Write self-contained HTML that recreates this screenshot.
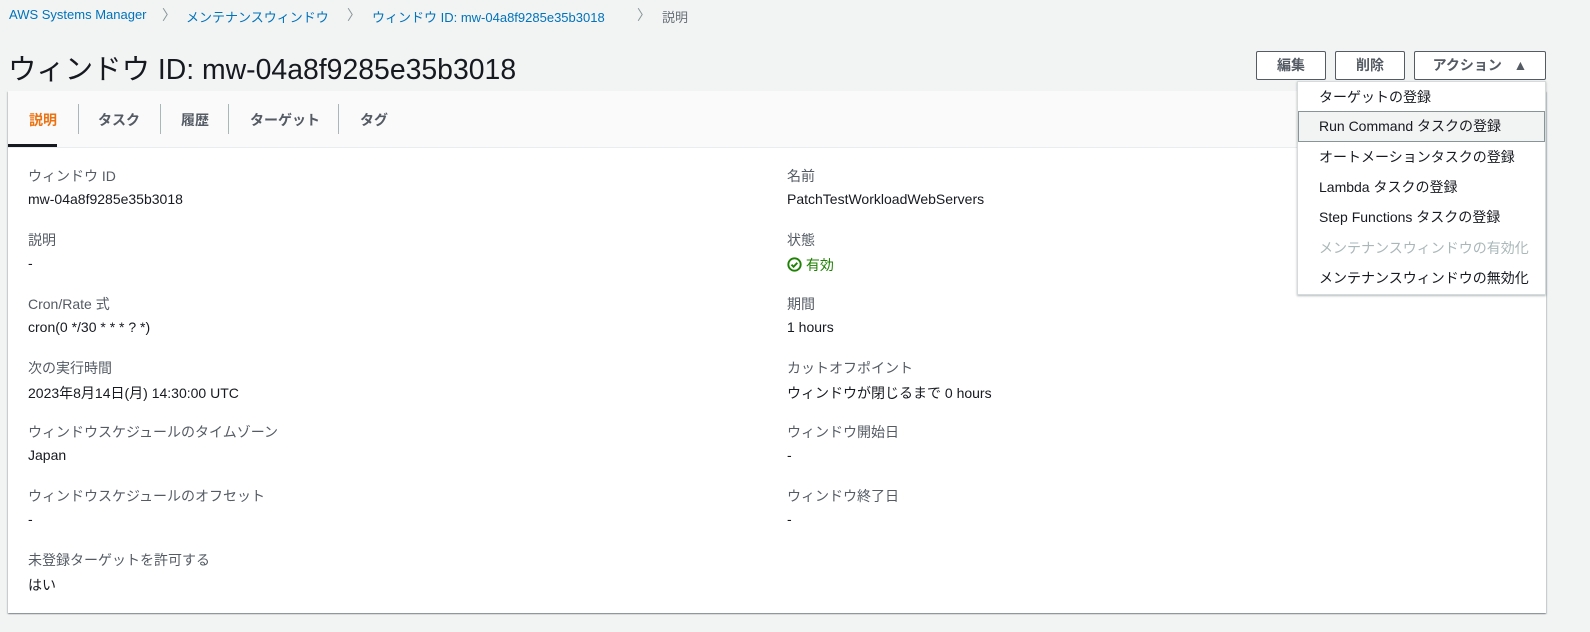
<!DOCTYPE html>
<html><head><meta charset="utf-8"><style>
*{margin:0;padding:0;box-sizing:border-box}
body{width:1590px;height:632px;background:#f2f3f3;font-family:"Liberation Sans","Noto Sans CJK JP",sans-serif;color:#16191f;position:relative;overflow:hidden}
.a{position:absolute;white-space:nowrap}
.bc{top:7px;font-size:13px;color:#0073bb}
.sep{position:absolute;top:5px;color:#879596;font-size:14px}
.btn{position:absolute;top:51px;height:29px;border:1px solid #545b64;background:#fff;font-size:14px;font-weight:bold;color:#545b64;text-align:center;line-height:27px;border-radius:2px}
.panel{position:absolute;left:8px;top:91px;width:1538px;height:522px;background:#fff;box-shadow:0 1px 1px 0 rgba(0,28,36,.3),1px 1px 1px 0 rgba(0,28,36,.15),-1px 1px 1px 0 rgba(0,28,36,.15)}
.tabs{position:absolute;left:0;top:0;width:100%;height:57px;background:#fafafa;border-bottom:1px solid #eaeded}
.tab{position:absolute;top:19px;font-size:14px;font-weight:bold;color:#545b64}
.tsep{position:absolute;top:13px;width:1px;height:30px;background:#aab7b8}
.lb{font-size:14px;color:#545b64}
.vl{font-size:14px;color:#16191f}
.dd{position:absolute;left:1297px;top:81px;width:249px;height:214px;background:#fff;border:1px solid #d5dbdb;box-shadow:0 1px 2px rgba(0,28,36,.3)}
.it{position:absolute;left:0;width:100%;height:30px;line-height:30px;padding-left:21px;font-size:14px;color:#16191f}
</style></head><body>
<div class="a bc" style="left:9px">AWS Systems Manager</div>
<div class="a sep" style="left:162px">〉</div>
<div class="a bc" style="left:186px">メンテナンスウィンドウ</div>
<div class="a sep" style="left:347px">〉</div>
<div class="a bc" style="left:372px">ウィンドウ ID: mw-04a8f9285e35b3018</div>
<div class="a sep" style="left:637px">〉</div>
<div class="a bc" style="left:662px;color:#687078">説明</div>
<div class="a" style="left:8px;top:47px;font-size:28.4px;color:#16191f">ウィンドウ ID: mw-04a8f9285e35b3018</div>
<div class="btn" style="left:1256px;width:70px">編集</div>
<div class="btn" style="left:1335px;width:70px">削除</div>
<div class="btn" style="left:1414px;width:132px">アクション &nbsp;&nbsp;▲</div>
<div class="panel">
<div class="tabs">
<div class="tab" style="left:21px;color:#ec7211">説明</div>
<div style="position:absolute;left:0;top:53px;width:49px;height:3px;background:#16191f"></div>
<div class="tsep" style="left:70px"></div>
<div class="tab" style="left:90px">タスク</div>
<div class="tsep" style="left:152px"></div>
<div class="tab" style="left:173px">履歴</div>
<div class="tsep" style="left:220px"></div>
<div class="tab" style="left:242px">ターゲット</div>
<div class="tsep" style="left:330px"></div>
<div class="tab" style="left:352px">タグ</div>
</div>
</div>
<div class="a lb" style="left:28px;top:166px">ウィンドウ ID</div>
<div class="a vl" style="left:28px;top:191px">mw-04a8f9285e35b3018</div>
<div class="a lb" style="left:28px;top:230px">説明</div>
<div class="a vl" style="left:28px;top:255px">-</div>
<div class="a lb" style="left:28px;top:294px">Cron/Rate 式</div>
<div class="a vl" style="left:28px;top:319px">cron(0 */30 * * * ? *)</div>
<div class="a lb" style="left:28px;top:358px">次の実行時間</div>
<div class="a vl" style="left:28px;top:383px">2023年8月14日(月) 14:30:00 UTC</div>
<div class="a lb" style="left:28px;top:422px">ウィンドウスケジュールのタイムゾーン</div>
<div class="a vl" style="left:28px;top:447px">Japan</div>
<div class="a lb" style="left:28px;top:486px">ウィンドウスケジュールのオフセット</div>
<div class="a vl" style="left:28px;top:511px">-</div>
<div class="a lb" style="left:28px;top:550px">未登録ターゲットを許可する</div>
<div class="a vl" style="left:28px;top:575px">はい</div>
<div class="a lb" style="left:787px;top:166px">名前</div>
<div class="a vl" style="left:787px;top:191px">PatchTestWorkloadWebServers</div>
<div class="a lb" style="left:787px;top:230px">状態</div>
<div class="a vl" style="left:787px;top:255px;color:#1d8102"><svg width="15" height="15" viewBox="0 0 16 16" style="vertical-align:-2px"><circle cx="8" cy="8" r="6.6" fill="none" stroke="#1d8102" stroke-width="2"/><path d="M4.8 8.2l2.2 2.2 4-4.2" fill="none" stroke="#1d8102" stroke-width="2"/></svg> 有効</div>
<div class="a lb" style="left:787px;top:294px">期間</div>
<div class="a vl" style="left:787px;top:319px">1 hours</div>
<div class="a lb" style="left:787px;top:358px">カットオフポイント</div>
<div class="a vl" style="left:787px;top:383px">ウィンドウが閉じるまで 0 hours</div>
<div class="a lb" style="left:787px;top:422px">ウィンドウ開始日</div>
<div class="a vl" style="left:787px;top:447px">-</div>
<div class="a lb" style="left:787px;top:486px">ウィンドウ終了日</div>
<div class="a vl" style="left:787px;top:511px">-</div>
<div class="dd">
<div class="it" style="top:0">ターゲットの登録</div>
<div class="it" style="top:29px;background:#f2f3f3;border:1px solid #879596;padding-left:20px;line-height:28px;height:31px">Run Command タスクの登録</div>
<div class="it" style="top:60px">オートメーションタスクの登録</div>
<div class="it" style="top:90px">Lambda タスクの登録</div>
<div class="it" style="top:120px">Step Functions タスクの登録</div>
<div class="it" style="top:151px;color:#aab7b8">メンテナンスウィンドウの有効化</div>
<div class="it" style="top:181px">メンテナンスウィンドウの無効化</div>
</div>
</body></html>
